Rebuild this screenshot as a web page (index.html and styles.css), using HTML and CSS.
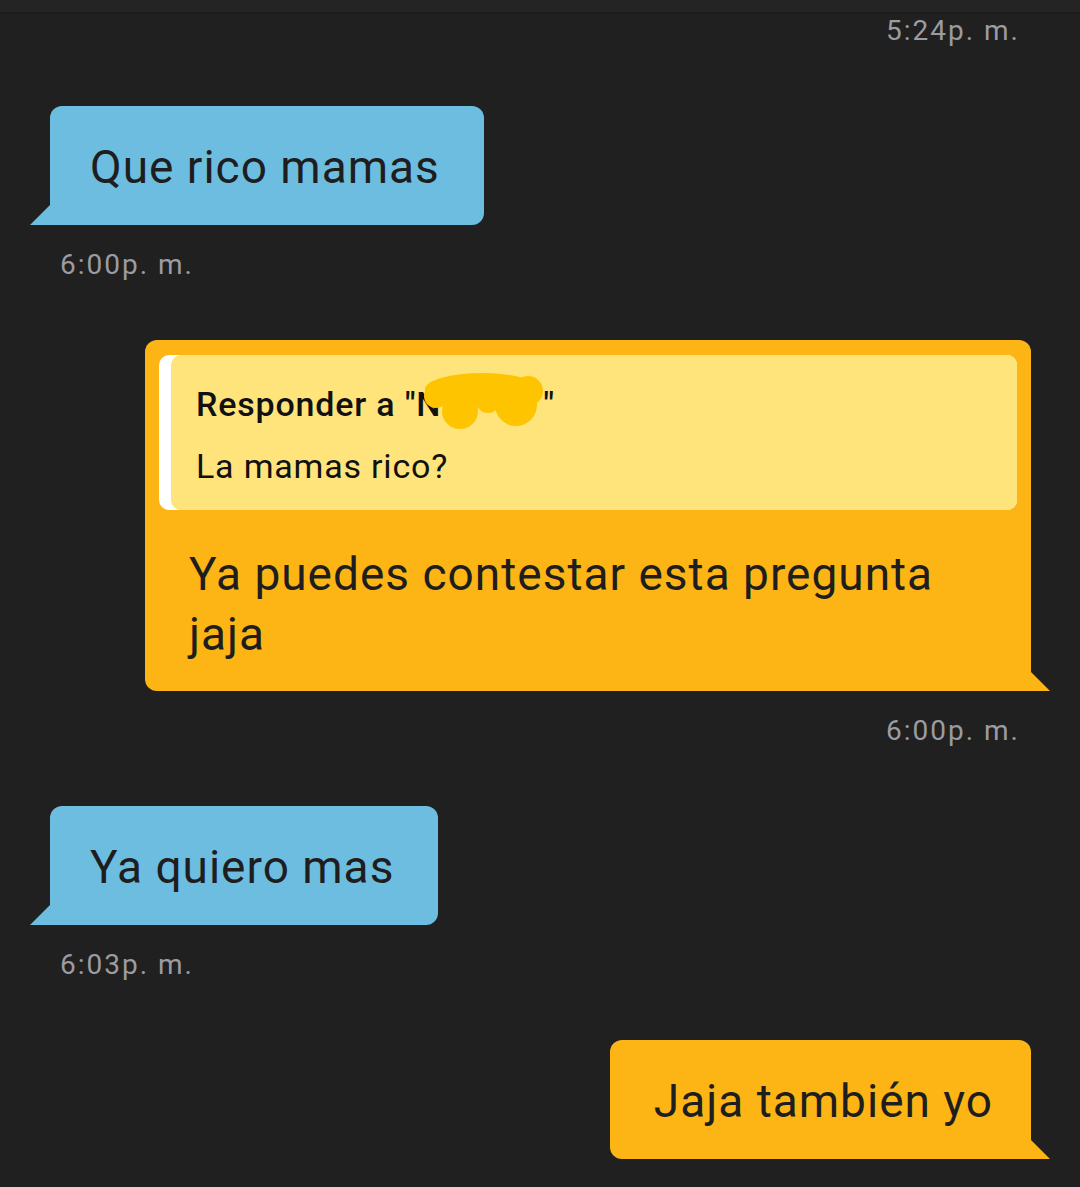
FILE: index.html
```html
<!DOCTYPE html>
<html lang="es">
<head>
    <meta charset="UTF-8">
    <meta name="viewport" content="width=device-width, initial-scale=1.0">
    <title>Chat</title>
    <link rel="stylesheet" href="styles.css">
</head>
<body>

<div class="top-bar"></div>

<div class="chat">
    <div class="group mine first">
        <span class="time">5:24p. m.</span>
    </div>

    <div class="group theirs">
        <div class="bubble">Que rico mamas</div>
        <span class="time">6:00p. m.</span>
    </div>

    <div class="group mine">
        <div class="bubble reply-bubble">
            <div class="reply">
                <div class="reply-inner">
                    <div class="reply-title">Responder a "<span class="name">Ni<svg class="scribble" viewBox="0 0 130 64" width="130" height="64"><g fill="#ffc400"><ellipse cx="64" cy="18" rx="57" ry="16"/><circle cx="42" cy="40" r="18"/><circle cx="98" cy="34" r="21"/><circle cx="18" cy="25" r="12"/><circle cx="110" cy="20" r="15"/><circle cx="70" cy="30" r="12"/></g></svg></span>"</div>
                    <div class="reply-text">La mamas rico?</div>
                </div>
            </div>
            <div class="reply-body">Ya puedes contestar esta pregunta jaja</div>
        </div>
        <span class="time">6:00p. m.</span>
    </div>

    <div class="group theirs">
        <div class="bubble">Ya quiero mas</div>
        <span class="time">6:03p. m.</span>
    </div>

    <div class="group mine">
        <div class="bubble">Jaja también yo</div>
    </div>
</div>

</body>
</html>
```

FILE: styles.css
```css
body {
    margin: 0;
    background-color: #202020;
    font-family: 'Roboto', 'Liberation Sans', sans-serif;
    overflow: hidden;
}

.top-bar {
    height: 14px;
    background-color: #242424;
    border-bottom: 2px solid #1b1b1b;
    box-sizing: border-box;
}

.chat {
    display: flex;
    flex-direction: column;
}

.group {
    display: flex;
    flex-direction: column;
}

.group + .group {
    margin-top: 55px;
}

.theirs {
    align-items: flex-start;
    padding-left: 50px;
}

.mine {
    align-items: flex-end;
    padding-right: 49px;
}

.bubble {
    position: relative;
    padding: 31px 44px 28px 40px;
    font-size: 46px;
    line-height: 60px;
    letter-spacing: 1px;
    color: #1e1e1e;
    border-radius: 12px;
}

.theirs .bubble {
    background-color: #6dbde0;
    border-bottom-left-radius: 0;
}

.mine .bubble {
    background-color: #fdb415;
    border-bottom-right-radius: 0;
    padding-left: 44px;
    padding-right: 38px;
}

.bubble::after {
    content: '';
    position: absolute;
    bottom: 0;
    width: 20px;
    height: 20px;
}

.theirs .bubble::after {
    left: -20px;
    background-color: #6dbde0;
    clip-path: polygon(100% 0, 100% 100%, 0 100%);
}

.mine .bubble::after {
    right: -19px;
    background-color: #fdb415;
    clip-path: polygon(0 0, 100% 100%, 0 100%);
}

.time {
    margin-top: 20px;
    font-size: 28px;
    line-height: 40px;
    letter-spacing: 2px;
    color: #9b9ba2;
}

.theirs .time {
    padding-left: 10px;
}

.mine .time {
    padding-right: 11px;
}

.first .time {
    margin-top: -3px;
}

.reply-bubble {
    width: 886px;
    box-sizing: border-box;
    padding: 15px 14px 27px;
}

.mine .reply-bubble {
    padding-left: 14px;
    padding-right: 14px;
}

.reply {
    background-color: #fff;
    border-radius: 10px;
    padding-left: 12px;
}

.reply-inner {
    background-color: #ffe47c;
    border-radius: 10px;
    padding: 18px 26px 13px 25px;
    font-size: 34px;
    line-height: 62px;
    letter-spacing: 0.8px;
    color: #111;
}

.reply-title {
    font-weight: 500;
}

.name {
    position: relative;
    display: inline-block;
    width: 127px;
    overflow: visible;
}

.scribble {
    position: absolute;
    left: 2px;
    top: -2px;
}

.reply-body {
    padding: 34px 30px 0;
}
```
